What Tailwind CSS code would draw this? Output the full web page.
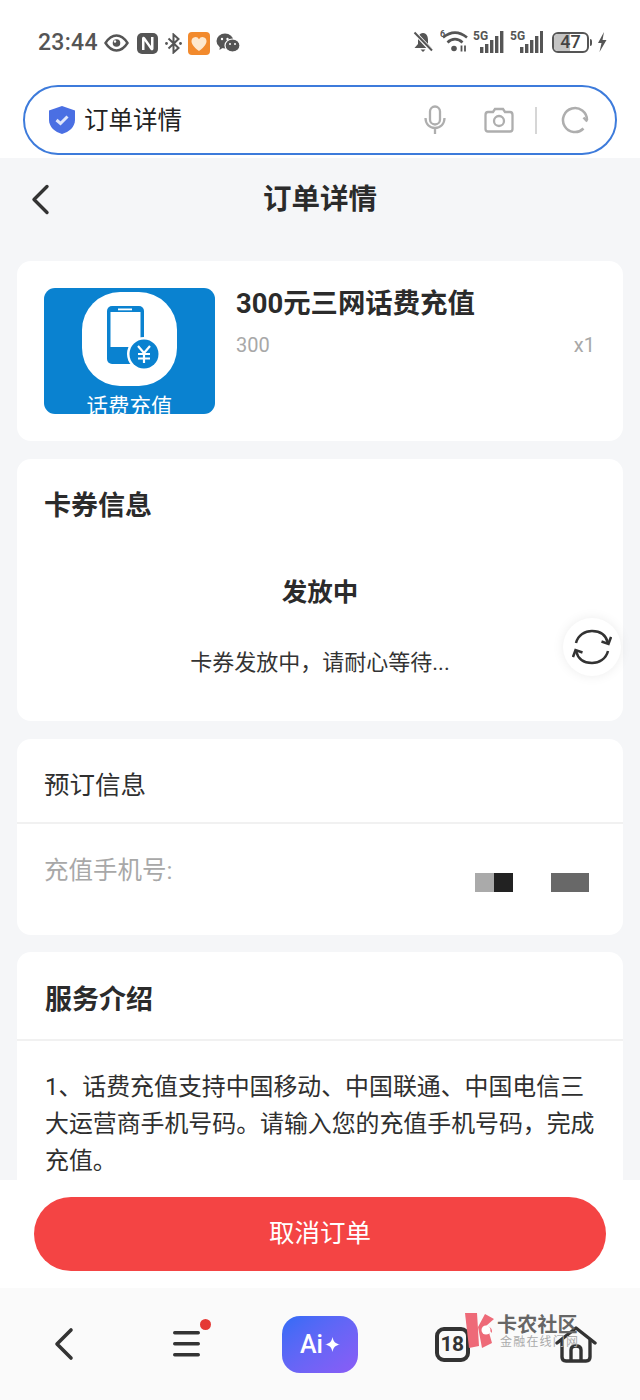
<!doctype html>
<html lang="zh"><head><meta charset="utf-8"><script src="https://cdn.jsdelivr.net/npm/@tailwindcss/browser@4"></script></head>
<body class="m-0">
<div class="relative w-[640px] h-[1400px] overflow-hidden flex flex-col bg-[#f5f6f8] font-['Roboto','Noto_Sans_CJK_SC',sans-serif] text-[#222]">
  <!-- system + address bar -->
  <header class="h-[158px] shrink-0 bg-white flex flex-col">
    <div class="h-[85px] flex items-start justify-between pl-[38px] pr-[33px] pt-[28px]">
      <div class="flex items-center gap-[6px] h-[30px] text-[#555]">
        <span class="text-[23px] font-medium tracking-[0.3px] leading-[30px]">23:44</span>
        <svg width="25" height="18" viewBox="0 0 25 18" fill="none" stroke="#555" stroke-width="2.4"><path d="M1.5 9C5 3.5 9 1.5 12.5 1.5S20 3.5 23.5 9C20 14.5 16 16.5 12.5 16.5S5 14.5 1.5 9Z"/><circle cx="12.5" cy="9" r="3.8" fill="#555" stroke="none"/><circle cx="11" cy="7.5" r="1.2" fill="#fff" stroke="none"/></svg>
        <svg width="21" height="21" viewBox="0 0 21 21" class="ml-[2px]"><rect width="21" height="21" rx="5" fill="#555"/><path d="M5 5.500C5 3.500 7 3 8 4.500L14 13V4H16.500V15.500C16.500 17.500 14.500 18 13.500 16.500L7.500 8V17H5Z" fill="#fff"/></svg>
        <svg width="17" height="21" viewBox="0 0 17 21" fill="none" stroke="#555" stroke-width="2" class="ml-[1px]"><path d="M3.500 5.500 13.500 15 8.500 19.500V1.500L13.500 6 3.500 15.500"/><circle cx="1.500" cy="10.500" r="1.400" fill="#555" stroke="none"/><circle cx="15.500" cy="10.500" r="1.400" fill="#555" stroke="none"/></svg>
        <svg width="22" height="23" viewBox="0 0 22 23"><rect width="22" height="23" rx="4" fill="#f28a2d"/><path d="M11 19C5 14.500 3.500 11.500 3.500 9A4 4 0 0 1 11 7.200 4 4 0 0 1 18.500 9C18.500 11.500 17 14.500 11 19Z" fill="#fde8cf"/></svg>
        <svg width="24" height="20" viewBox="0 0 24 20" fill="#555"><ellipse cx="9" cy="8" rx="8.500" ry="7.500"/><path d="M4 12 3.500 17 8 14Z"/><ellipse cx="16.500" cy="12.500" rx="7.500" ry="6.500" stroke="#fff" stroke-width="1.200"/><circle cx="6" cy="6" r="1.200" fill="#fff"/><circle cx="11.500" cy="6" r="1.200" fill="#fff"/><circle cx="14" cy="11" r="1" fill="#fff"/><circle cx="19" cy="11" r="1" fill="#fff"/></svg>
      </div>
      <div class="flex items-center h-[30px] text-[#555] -mt-[1px]">
        <svg width="20" height="22" viewBox="0 0 20 22" fill="#555"><path d="M10 2C6 2 5 6 5 9V13L1.500 17H18.500L15 13V9C15 6 14 2 10 2Z"/><path d="M7.500 18.500H12.500L10 21Z"/><path d="M1 1 19 20" stroke="#fff" stroke-width="4"/><path d="M1.500 1.500 19 19.500" stroke="#555" stroke-width="2"/></svg>
        <svg width="28" height="24" viewBox="0 0 28 24" fill="none" stroke="#555" stroke-width="2.600" class="ml-[7px]"><path d="M3 7.500C11 1 19 1 27 7.500"/><path d="M7.500 12.500C12 8 18 8 22.500 12.500"/><circle cx="14" cy="18.500" r="2.800" fill="#555" stroke="none"/><path d="M21.500 15.500v6M25 15.500v6" stroke-width="1.800"/><text x="0" y="7" font-size="9" font-weight="700" fill="#555" stroke="none" font-family="Roboto">6</text></svg>
        <svg width="32" height="24" viewBox="0 0 32 24" class="ml-[5px]" fill="#555"><text x="0" y="10" font-size="12" font-weight="700" font-family="Roboto">5G</text><rect x="7" y="17" width="3.400" height="6"/><rect x="12" y="14" width="3.400" height="9"/><rect x="17" y="10" width="3.400" height="13"/><rect x="22" y="6" width="3.400" height="17"/><rect x="27" y="1" width="3.400" height="22"/></svg>
        <svg width="33" height="24" viewBox="0 0 33 24" class="ml-[5px]" fill="#555"><text x="0" y="10" font-size="12" font-weight="700" font-family="Roboto">5G</text><rect x="10" y="17" width="3.400" height="6"/><rect x="15" y="14" width="3.400" height="9"/><rect x="20" y="10" width="3.400" height="13"/><rect x="25" y="6" width="3.400" height="17"/><rect x="30" y="1" width="3" height="22"/></svg>
        <span class="relative ml-[9px] w-[37px] h-[21px] rounded-[6px] border-[2px] border-[#555] overflow-hidden flex items-center justify-center">
          <span class="absolute left-0 top-0 bottom-0 w-[47%] bg-[#c4c4c4]"></span>
          <span class="relative text-[18px] font-medium leading-none text-[#444]">47</span>
        </span>
        <span class="w-[2px] h-[7px] bg-[#555] ml-[1px] mr-[5px] rounded-r-sm"></span>
        <svg width="10" height="20" viewBox="0 0 10 20" fill="#555"><path d="M7 0 1 11H4.500L2.500 20 9.500 8H5.500Z"/></svg>
      </div>
    </div>
    <div class="mx-[23px] h-[70px] rounded-full border-[2.5px] border-[#3d7bdb] bg-white flex items-center pl-[23px] pr-[26px]">
      <svg width="28" height="30" viewBox="0 0 28 30"><path d="M14 1 27 5.500V15C27 22 21 27 14 29 7 27 1 22 1 15V5.500Z" fill="#4a6fe3"/><path d="M8.500 15 12.500 18.500 19.500 11.500" fill="none" stroke="#dfe6fb" stroke-width="3"/></svg>
      <span class="ml-[8px] mt-[2px] text-[24.500px] leading-none text-[#222]">订单详情</span>
      <svg class="ml-auto" width="22" height="30" viewBox="0 0 22 30" fill="none" stroke="#aeaeae" stroke-width="2.300"><rect x="6" y="1.500" width="10" height="18" rx="5"/><path d="M1.500 13C1.500 19 5.500 23 11 23S20.500 19 20.500 13M11 23V29"/></svg>
      <svg class="ml-[38px]" width="30" height="26" viewBox="0 0 30 26" fill="none" stroke="#aeaeae" stroke-width="2.300"><path d="M4 5H9L11 2H19L21 5H26Q28.500 5 28.500 8V22Q28.500 24.500 26 24.500H4Q1.500 24.500 1.500 22V8Q1.500 5 4 5Z"/><circle cx="15" cy="14" r="5"/></svg>
      <span class="ml-[21px] w-[2px] h-[27px] bg-[#d6d6d6]"></span>
      <svg class="ml-[24px]" width="28" height="28" viewBox="0 0 28 28" fill="none" stroke="#aeaeae" stroke-width="2.500"><path d="M22.500 22.500A12 12 0 1 1 26 14"/><path d="M26.200 15.500 22.500 11.500"/></svg>
    </div>
  </header>

  <!-- scroll area -->
  <main class="flex-1 min-h-0 overflow-hidden">
    <div class="relative h-[82px] pt-[2px] flex items-center justify-center">
      <svg class="absolute left-[31px] top-[26px]" width="19" height="31" viewBox="0 0 19 31" fill="none" stroke="#333" stroke-width="3.400" stroke-linecap="round" stroke-linejoin="round"><path d="M16 2.500 3 15.500 16 28.500"/></svg>
      <h1 class="text-[28.500px] font-bold leading-none text-[#2b2b2b]">订单详情</h1>
    </div>
    <div class="mt-[21px] mx-[17px] flex flex-col gap-[18px]">
      <section class="h-[180px] rounded-[14px] bg-white pl-[27px] pr-[29px] pt-[27px] flex">
        <div class="relative w-[171px] h-[126px] rounded-[11px] bg-[#0a82d0] overflow-hidden shrink-0">
          <div class="absolute left-[38px] top-[4px] w-[95px] h-[94px] rounded-[38px] bg-white flex items-center justify-center">
            <svg class="ml-[3px] -mt-[1px]" width="64" height="65" viewBox="0 0 64 65"><rect x="8" y="0" width="37" height="58" rx="5" fill="#0a82d0"/><rect x="11.500" y="6" width="30" height="35" fill="#fff"/><rect x="19" y="2.500" width="14" height="1.800" fill="#fff"/><circle cx="45" cy="48" r="17" fill="#fff"/><circle cx="45" cy="48" r="14.500" fill="#0a82d0"/><path d="M39 40 45 47 51 40M45 47V57M39 48H51M39 52.500H51" fill="none" stroke="#fff" stroke-width="2.200"/></svg>
          </div>
          <div class="absolute left-0 right-0 top-[106px] text-center text-[21.500px] leading-[26px] text-white">话费充值</div>
        </div>
        <div class="ml-[21px] flex-1 min-w-0">
          <div class="text-[27.400px] font-bold leading-[34px] -mt-[1px] text-[#2b2b2b] whitespace-nowrap">300元三网话费充值</div>
          <div class="mt-[10px] flex justify-between text-[20px] leading-[28px] text-[#a8a8a8]"><span>300</span><span class="mr-[-1px]">x1</span></div>
        </div>
      </section>

      <section class="relative h-[262px] rounded-[14px] bg-white">
        <div class="pl-[27px] pt-[29px] text-[27px] font-bold leading-[36px] text-[#2b2b2b]">卡券信息</div>
        <div class="mt-[50px] text-center text-[25.500px] font-bold leading-[36px] text-[#2b2b2b]">发放中</div>
        <div class="mt-[37px] text-center text-[22px] leading-[32px] text-[#333]">卡券发放中，请耐心等待...</div>
      </section>

      <section class="h-[196px] rounded-[14px] bg-white">
        <div class="h-[85px] pl-[27px] pt-[9px] flex items-center border-b-[2px] border-[#f1f1f1] text-[25.500px] text-[#2f2f2f]">预订信息</div>
        <div class="relative pl-[27px] pt-[30px] text-[24.500px] leading-[34px] text-[#a8a8a8]">充值手机号:
          <div class="absolute top-[49px] left-[458px] flex">
            <span class="w-[19px] h-[19px] bg-[#aaaaaa]"></span><span class="w-[19px] h-[19px] bg-[#222]"></span>
            <span class="ml-[38px] w-[38px] h-[19px] bg-[#686868]"></span>
          </div>
        </div>
      </section>

      <section class="rounded-[14px] bg-white -mt-[1px]">
        <div class="h-[89px] pl-[28px] pt-[10px] flex items-center border-b-[2px] border-[#f1f1f1] text-[27px] font-bold text-[#2b2b2b]">服务介绍</div>
        <p class="pl-[28px] pr-[24px] pt-[28px] text-[23.900px] leading-[37px] text-[#2f2f2f]">1、话费充值支持中国移动、中国联通、中国电信三大运营商手机号码。请输入您的充值手机号码，完成充值。</p>
        <div class="h-[60px]"></div>
      </section>
    </div>
  </main>

  <!-- action bar -->
  <div class="h-[108px] shrink-0 bg-white px-[34px] pt-[17px]">
    <button class="w-full h-[74px] rounded-full bg-[#f44444] text-white text-[25.500px] leading-none">取消订单</button>
  </div>

  <!-- browser nav -->
  <nav class="h-[112px] shrink-0 bg-[#fafafa] flex items-start pl-[26px] pt-[28px]">
    <div class="w-[76px] h-[56px] flex items-center justify-center">
      <svg width="22" height="34" viewBox="0 0 22 34" fill="none" stroke="#333" stroke-width="3.600" stroke-linecap="round" stroke-linejoin="round"><path d="M18 3 4 17 18 31"/></svg>
    </div>
    <div class="relative ml-[47px] w-[76px] h-[56px] flex items-center justify-center">
      <svg width="28" height="28" viewBox="0 0 28 28" fill="#333"><rect x="0" y="1" width="27" height="3.500" rx="1.700"/><rect x="0" y="12" width="27" height="3.500" rx="1.700"/><rect x="0" y="23" width="27" height="3.500" rx="1.700"/></svg>
      <span class="absolute right-[14px] top-[3px] w-[11px] h-[11px] rounded-full bg-[#e53935]"></span>
    </div>
    <div class="ml-[57px] w-[76px] h-[57px] rounded-[18px] bg-linear-to-br from-[#2f6cf6] to-[#8a5cf6] flex items-center justify-center gap-[2px] text-white">
      <span class="text-[25px] font-medium leading-none">Ai</span>
      <svg width="15" height="15" viewBox="0 0 15 15" fill="#fff"><path d="M7.500 0C8.300 4.500 10.500 6.700 15 7.500 10.500 8.300 8.300 10.500 7.500 15 6.700 10.500 4.500 8.300 0 7.500 4.500 6.700 6.700 4.500 7.500 0Z"/></svg>
    </div>
    <div class="ml-[56px] w-[76px] h-[56px] flex items-center justify-center">
      <span class="w-[35px] h-[35px] rounded-[9px] border-[4px] border-[#333] flex items-center justify-center text-[21px] font-bold leading-none tracking-[-0.5px] text-[#333]">18</span>
    </div>
    <div class="ml-[48px] w-[76px] h-[56px] flex items-center justify-center">
      <svg width="42" height="37" viewBox="0 0 42 37" fill="none" stroke="#333" stroke-width="3.400" stroke-linecap="round" stroke-linejoin="round"><path d="M2 17 21 2 40 17"/><path d="M7 14V31Q7 35 11 35H31Q35 35 35 31V14"/><path d="M16 34V24Q16 20 21 20T26 24V34"/></svg>
    </div>
  </nav>

  <!-- floating refresh -->
  <button class="absolute left-[563px] top-[618px] w-[58px] h-[58px] rounded-full bg-white shadow-[0_0_12px_rgba(0,0,0,0.08)] flex items-center justify-center">
    <svg width="40" height="36" viewBox="0 0 40 36" fill="none" stroke="#333" stroke-width="2.500"><path d="M4 14C6 6 13 2 20 2 28 2 34 6 36 14"/><path d="M36 22C34 30 27 34 20 34 12 34 6 30 4 22"/><path d="M29.500 12.500 36.500 15 39 8" /><path d="M10.500 23.500 3.500 21 1 28"/></svg>
  </button>

  <!-- watermark -->
  <div class="absolute left-[464px] top-[1313px] flex items-start pointer-events-none">
    <svg width="32" height="36" viewBox="0 0 32 36"><path d="M1 0H13L15 33 5 35Z" fill="#ee6a78"/><path d="M14 14 21 1 30 6 22 13Q29 14 28 20L24 16 28 30 18 35Z" fill="#ee6a78"/><circle cx="22" cy="17" r="4.500" fill="#fff"/></svg>
    <div class="ml-[1px] w-[90px]">
      <div class="text-[20px] font-bold leading-[24px] tracking-[0.2px] text-[#666]">卡农社区</div>
      <div class="text-[12px] leading-[14px] -mt-[2px] ml-[3px] tracking-[1.200px] text-[#aaa] whitespace-nowrap">金融在线门网</div>
    </div>
  </div>
</div>
</body></html>
